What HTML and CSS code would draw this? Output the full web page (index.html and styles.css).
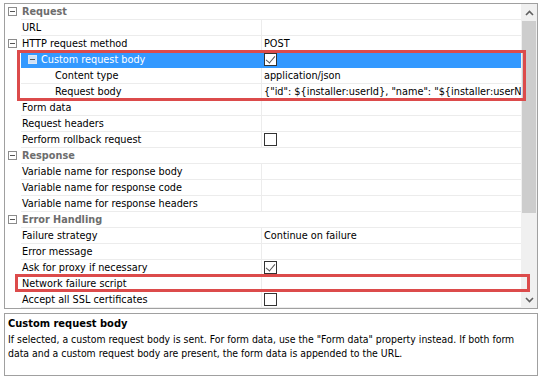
FILE: index.html
```html
<!DOCTYPE html>
<html lang="en">
<head>
  <meta charset="UTF-8">
  <title>HTTP request properties</title>
  <link rel="stylesheet" href="styles.css">
</head>
<body>
  <div class="grid">
    <div class="rows">
      <!-- Request -->
      <div class="row category">
        <div class="margin"><span class="toggle"></span></div>
        <div class="name">Request</div>
      </div>
      <div class="row">
        <div class="margin"></div>
        <div class="name">URL</div>
        <div class="value"></div>
      </div>
      <div class="row">
        <div class="margin"><span class="toggle"></span></div>
        <div class="name">HTTP request method</div>
        <div class="value">POST</div>
      </div>
      <div class="row selected">
        <div class="margin"></div>
        <div class="name"><span class="toggle small"></span>Custom request body</div>
        <div class="value"><span class="check checked"></span></div>
      </div>
      <div class="row">
        <div class="margin"></div>
        <div class="name sub">Content type</div>
        <div class="value">application/json</div>
      </div>
      <div class="row">
        <div class="margin"></div>
        <div class="name sub">Request body</div>
        <div class="value">{"id": ${installer:userId}, "name": "${installer:userName}"}</div>
      </div>
      <div class="row">
        <div class="margin"></div>
        <div class="name">Form data</div>
        <div class="value"></div>
      </div>
      <div class="row">
        <div class="margin"></div>
        <div class="name">Request headers</div>
        <div class="value"></div>
      </div>
      <div class="row">
        <div class="margin"></div>
        <div class="name">Perform rollback request</div>
        <div class="value"><span class="check"></span></div>
      </div>

      <!-- Response -->
      <div class="row category">
        <div class="margin"><span class="toggle"></span></div>
        <div class="name">Response</div>
      </div>
      <div class="row">
        <div class="margin"></div>
        <div class="name">Variable name for response body</div>
        <div class="value"></div>
      </div>
      <div class="row">
        <div class="margin"></div>
        <div class="name">Variable name for response code</div>
        <div class="value"></div>
      </div>
      <div class="row">
        <div class="margin"></div>
        <div class="name">Variable name for response headers</div>
        <div class="value"></div>
      </div>

      <!-- Error Handling -->
      <div class="row category">
        <div class="margin"><span class="toggle"></span></div>
        <div class="name">Error Handling</div>
      </div>
      <div class="row">
        <div class="margin"></div>
        <div class="name">Failure strategy</div>
        <div class="value">Continue on failure</div>
      </div>
      <div class="row">
        <div class="margin"></div>
        <div class="name">Error message</div>
        <div class="value"></div>
      </div>
      <div class="row">
        <div class="margin"></div>
        <div class="name">Ask for proxy if necessary</div>
        <div class="value"><span class="check checked"></span></div>
      </div>
      <div class="row">
        <div class="margin"></div>
        <div class="name">Network failure script</div>
        <div class="value"></div>
      </div>
      <div class="row">
        <div class="margin"></div>
        <div class="name">Accept all SSL certificates</div>
        <div class="value"><span class="check"></span></div>
      </div>
    </div>

    <div class="scrollbar">
      <svg class="arrow" width="9" height="6" viewBox="0 0 9 6"><polyline points="1,5 4.5,1.5 8,5" fill="none" stroke="#606060" stroke-width="1.6"/></svg>
      <div class="track"><div class="thumb"></div></div>
      <svg class="arrow" width="9" height="6" viewBox="0 0 9 6"><polyline points="1,1 4.5,4.5 8,1" fill="none" stroke="#606060" stroke-width="1.6"/></svg>
    </div>

    <!-- marcas rojas -->
    <div class="mark mark-body"></div>
    <div class="mark mark-script"></div>
  </div>

  <div class="description">
    <div class="desc-title">Custom request body</div>
    <p>If selected, a custom request body is sent. For form data, use the "Form data" property instead. If both form data and a custom request body are present, the form data is appended to the URL.</p>
  </div>
</body>
</html>
```

FILE: styles.css
```css
* {
  margin: 0;
  padding: 0;
  box-sizing: border-box;
}

body {
  margin: 3px 3px 0 4px;
  background-color: #ffffff;
  font-family: "DejaVu Sans Condensed", "DejaVu Sans", sans-serif;
  font-size: 10.8px;
  color: #000;
}

/* Property grid */
.grid {
  position: relative;
  display: flex;
  border: 1px solid #a0a0a0;
  height: 306px;
}

.rows {
  flex: 1;
  min-width: 0;
  overflow: hidden;
}

.row {
  display: flex;
  height: 16px;
  line-height: 15px;
}

.margin {
  width: 16px;
  flex-shrink: 0;
  position: relative;
}

.name {
  width: 240px;
  flex-shrink: 0;
  padding-left: 1px;
  border-bottom: 1px solid #ececec;
  white-space: nowrap;
  overflow: hidden;
  display: flex;
  align-items: center;
}

.name.sub {
  padding-left: 34px;
}

.value {
  flex: 1;
  min-width: 0;
  border-left: 1px solid #ececec;
  border-bottom: 1px solid #ececec;
  padding-left: 2px;
  white-space: nowrap;
  overflow: hidden;
  display: flex;
  align-items: center;
}

.category .name {
  flex: 1;
  width: auto;
  font-weight: bold;
  color: #6d6d6d;
}

/* Expander */
.toggle {
  display: inline-block;
  position: relative;
  flex-shrink: 0;
  width: 9px;
  height: 9px;
  border: 1px solid #8c8c8c;
  background-color: #fff;
}

.toggle::after {
  content: "";
  position: absolute;
  left: 1px;
  top: 3px;
  width: 5px;
  height: 1px;
  background-color: #555;
}

.margin .toggle {
  position: absolute;
  left: 3px;
  top: 3px;
}

.toggle.small {
  margin: 0 4px 0 6px;
  border-color: #dde8f5;
  background-color: #cfe0f5;
}

/* Selected row */
.selected .name,
.selected .value {
  background-color: #3399ff;
  color: #fff;
  border-bottom-color: #3399ff;
  border-left-color: #3399ff;
}

/* Checkbox */
.check {
  display: inline-block;
  position: relative;
  flex-shrink: 0;
  width: 13px;
  height: 13px;
  border: 1px solid #333;
  background-color: #fff;
}

.check.checked::after {
  content: "";
  position: absolute;
  left: 3px;
  top: 0px;
  width: 4px;
  height: 8px;
  border-right: 1.5px solid #555;
  border-bottom: 1.5px solid #555;
  transform: rotate(40deg);
}

/* Scrollbar */
.scrollbar {
  width: 16px;
  flex-shrink: 0;
  background-color: #f0f0f0;
  display: flex;
  flex-direction: column;
  align-items: center;
}

.arrow {
  margin: 6px 0 5px;
}

.track {
  flex: 1;
  width: 100%;
}

.thumb {
  margin: 0 1px;
  height: 192px;
  background-color: #cdcdcd;
}

/* Red marks */
.mark {
  position: absolute;
  border: 3px solid #dc4b4b;
}

.mark-body {
  left: 12px;
  top: 46px;
  width: 509px;
  height: 51px;
}

.mark-script {
  left: 10px;
  top: 270px;
  width: 515px;
  height: 18px;
}

/* Description */
.description {
  margin-top: 4px;
  height: 63px;
  border: 1px solid #a0a0a0;
  padding: 2px 3px;
  font-size: 10.4px;
  line-height: 14px;
}

.desc-title {
  font-weight: bold;
  font-size: 11px;
  line-height: 16px;
}
```
